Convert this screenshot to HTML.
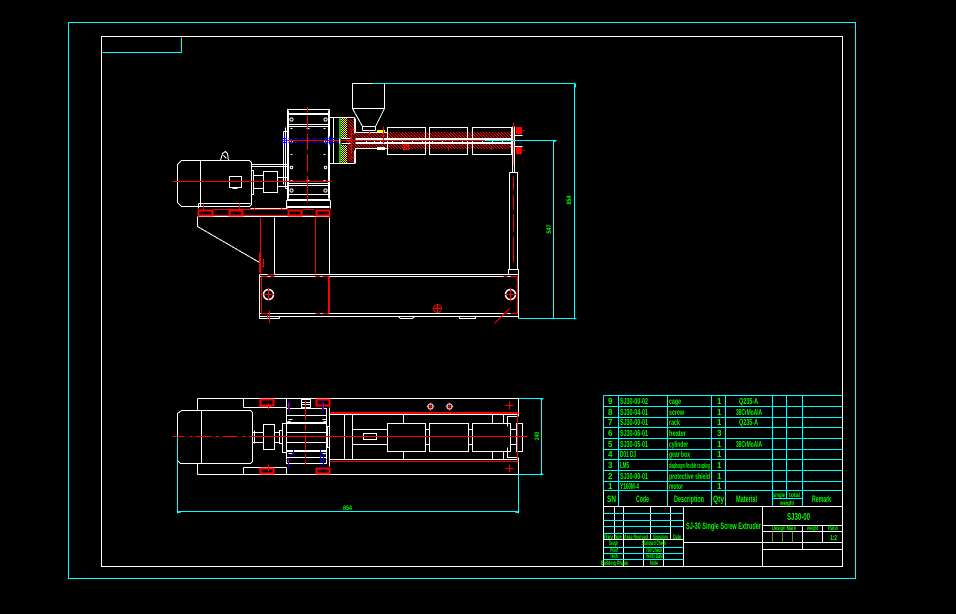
<!DOCTYPE html>
<html lang="en"><head><meta charset="utf-8"><title>SJ-30 Single Screw Extruder</title>
<style>
html,body{margin:0;padding:0;background:#000;width:956px;height:614px;overflow:hidden}
svg{display:block}
text{font-family:"Liberation Sans",sans-serif;fill:#00ff00;font-size:8px;font-weight:bold}
.c{text-anchor:middle}
</style></head><body>
<svg width="956" height="614" viewBox="0 0 956 614" xmlns="http://www.w3.org/2000/svg">
<defs>
<pattern id="rc" width="3" height="3" patternUnits="userSpaceOnUse"><rect width="3" height="3" fill="#200000"/><rect width="1" height="1" fill="#f00"/><rect x="1" y="1" width="1" height="1" fill="#f00"/><rect x="2" y="2" width="1" height="1" fill="#f00"/></pattern>
<pattern id="yc" width="2" height="2" patternUnits="userSpaceOnUse"><rect width="2" height="2" fill="#000"/><rect width="1" height="1" fill="#ff0"/><rect x="1" y="1" width="1" height="1" fill="#ff0"/></pattern>
</defs>
<rect width="956" height="614" fill="#000"/>
<g transform="translate(.5,.5)" fill="none" shape-rendering="crispEdges">
<!-- sheet frames -->
<path stroke="#00ffff" d="M68 22H855V578H68ZM102 52H181V37"/>
<path stroke="#fff" d="M101 36H842V566H101Z"/>

<!-- fills -->
<g stroke="none" transform="translate(-.5,-.5)">
<rect x="355" y="132" width="157" height="6" fill="url(#rc)"/>
<rect x="355" y="143" width="157" height="6" fill="url(#rc)"/>
<rect x="346" y="119" width="9" height="43" fill="url(#rc)"/>
<rect x="340" y="118" width="7" height="20" fill="url(#yc)"/>
<rect x="340" y="145" width="7" height="18" fill="url(#yc)"/>
<rect x="339" y="118" width="2" height="45" fill="#00c800"/>
<rect x="516" y="127" width="6" height="7" fill="#f00"/>
<rect x="516" y="147" width="6" height="7" fill="#f00"/>
<rect x="377" y="130" width="8" height="3" fill="#ff0"/>
<rect x="377" y="147" width="8" height="3" fill="#fff"/>
</g>

<!-- TOP VIEW white -->
<path stroke="#fff" d="
M181 160H249L251 162V204L249 206H181L177 202V164ZM200 160V206
M229 176H241V187H229Z M232 188H237
M220 160L222 153L225 151L227 153L228 160 M223 155L226 158
M251 164H287M251 166H287
M251 170H253V194H251Z M253 175H263M253 188H263
M263 171H277V192H263Z M277 177H287M277 186H287
M198 203H250M198 203V208M250 208H287
M287 109H329V199H287Z
M288 110V198M328 110V198
M287 113H329M287 114H329M287 124H329M287 126H329M287 183H329M287 185H329M287 194H329
M285 127V188M283 131V184M285 188H287M283 131H287
M329 117H354M329 163H354M333 117V163M354 117V133M354 150V163
M286 200H330M286 200V208M330 200V208
M286 206H329M286 207H329
M198 216H329
M197 216V226L259 262
M274 217V274M329 217V274
M259 274H518M259 276H518M259 313H518M259 316H518M259 318V274M518 318V274M259 318H279M279 316V318
M398 316L400 318H412L414 316M459 316V318H475V316
M508 274V269H518V274
M509 172H517V269M509 172V269M512 126V172M514 126V172
M352 83H384V108H352Z M352 108L362 126H375L384 108
M362 126V130M375 126V130M362 130H375
M387 127H425V154H387ZM429 127H467V154H429ZM472 127H511V154H472Z
M355 138H512M355 139H512M355 142H512M355 143H512M355 132H387M355 148H387M355 132V118M355 148V163
M366 138V143M374 138V143M380 138V143M392 138V143M402 138V143M412 138V143M422 138V143M432 138V143M442 138V143M452 138V143M462 138V143M472 138V143M482 138V143M492 138V143M502 138V143
M510 135H522M510 146H522"/>
<circle cx="268" cy="294" r="5" stroke="#fff" stroke-width="1.5" shape-rendering="auto"/>
<circle cx="510" cy="294" r="5" stroke="#fff" stroke-width="1.5" shape-rendering="auto"/>

<!-- gearbox bolts -->
<g stroke="#fff" shape-rendering="auto">
<circle cx="291" cy="119" r="1.6"/><circle cx="325" cy="119" r="1.6"/><circle cx="291" cy="190" r="1.6"/><circle cx="325" cy="190" r="1.6"/>
<circle cx="291" cy="141" r="1.2"/><circle cx="325" cy="141" r="1.2"/><circle cx="291" cy="167" r="1.2"/><circle cx="325" cy="167" r="1.2"/>
</g>
<path stroke="#fff" d="M290 128H292M306 128H309M323 128H325M290 154H292M323 154H325M290 180H292M323 180H325M306 180H309"/>

<!-- TOP VIEW red -->
<path stroke="#f00" d="M260 217V274M315 217V274"/>
<path stroke="#f00" stroke-width="2" d="M198 210H212V215H198ZM229 210H242V215H229ZM288 210H301V215H288ZM316 210H329V215H316Z"/>
<path stroke="#f00" d="M213 209H287M302 209H314M213 215H287M302 215H314"/>
<path stroke="#f00" d="
M281 140H330M330 140H512
M203 203V209M239 203V209M254 207V209M281 207V209
M259 252V272M263 258V266H261
M261 276V313H268M261 276H267M267 274H274M270 276H274M315 276H320M322 276H328M328 276V313M329 276V313M315 313H320M322 313H328
M503 276H507M510 276H517V313H510M503 313H507
M268 287V300M263 294H274M510 287V301M504 294H516
M269 310V322M267 314V318M494 323L509 308
M383 126V143M369 130V135M513 122V126M513 127V165M513 176V190M513 194V210M513 214V232M513 236V262
M351 130V154M352 140H355
M350 129H354M350 157H354M520 127V134M520 147V154M522 130H524M522 150H524
M403 146V150M448 146V150M491 146V149"/>
<path stroke="#f00" d="M404 144H408V149H404Z"/>
<circle cx="437" cy="308" r="4" stroke="#f00" shape-rendering="auto"/>
<path stroke="#f00" d="M433 308H441M437 304V312"/>

<!-- blue -->
<path stroke="#0000ff" stroke-dasharray="4 2" d="M282 138H340M282 142H340"/>
<path stroke="#0000ff" d="M282 137V144M284 136V145M286 137V144M327 135V145M329 136V144M331 138V143"/>
<path stroke="#fff" d="M339 138V143M341 138H350M341 143H350"/>

<!-- Dim top cyan -->
<path stroke="#00ffff" d="M372 83H575M574 83V319M518 318H576M484 140H556M553 140V318M518 318H555M574 84H575V87M553 141H555"/>

<!-- BOTTOM VIEW white -->
<path stroke="#fff" d="
M181 410H250L252 412V461L250 463H184L180 463L177 460V413Z M201 410V463
M197 398H518M197 474H518M197 398V410M197 463V474
M243 398V407M243 467V474M243 407H286M243 467H286M286 398V408M286 467V474
M252 432H263M252 442H263M252 428V445M254 430V443
M263 424H274V449H263Z M274 432H279M274 442H279
M279 430H282V443H279Z
M282 423H286V452H282Z
M286 408H326V463H286Z
M286 415H326M286 422H326M286 423H326M286 432H326M286 442H326M286 450H326M286 451H326M286 457H326
M327 426H329V447H327Z M326 426H329
M329 414H518M329 459H518M329 407V466
M344 414V459M352 414V459
M352 429H387M352 444H387
M363 433H376V439H363Z
M387 423H425V451H387ZM429 423H468V451H429ZM472 423H510V451H472Z
M403 414V423M403 451V459M492 414V423M492 451V459M503 414V423M503 451V459
M425 429H429M425 444H429M468 429H472M468 444H472M510 429H516M510 444H516
M516 423H522V451H516Z
M507 426V416H517M507 447V457H517
M518 398V416M518 457V474
M301 404V399H310V404H301Z"/>
<path stroke="#fff" d="M301 402H310V407H301Z"/>

<!-- BOTTOM VIEW red -->
<path stroke="#f00" d="M172 436H184M189 436H192M195 436H211M215 436H219M222 436H237M242 436H245M248 436H527
M330 413H518M330 412H518M329 461H518M517 413V461
M258 406H271M268 403V409M258 468H271M268 464V471
M505 405H513M509 401V409M505 468H513M509 464V472
M305 400V420M305 424V430M305 434V450M305 454V458M305 460V464
M288 402V409M323 402V409M288 458V466M323 458V466
M426 406H434M430 402V410M445 406H453M449 402V410"/>
<path stroke="#f00" stroke-width="2" d="M260 399H273V405H260ZM316 399H329V405H316ZM260 468H273V473H260ZM316 468H329V473H316Z"/>
<g stroke="#fff" shape-rendering="auto"><circle cx="430" cy="406" r="2.6"/><circle cx="449" cy="406" r="2.6"/></g>
<path stroke="#fff" d="M288 419H292M322 419H326M288 453H292M322 453H326M287 421H290M323 421H326"/>
<path stroke="#0000ff" d="M289 400V411M322 400V411M288 462V468M289 455L293 453V449M320 449V462M323 456V468M286 459H290M324 459H326"/>

<!-- bottom dims cyan -->
<path stroke="#00ffff" d="M518 398H543M518 474H543M541 398V474M540 399H542M540 473H542M177 436V513M518 474V513M177 511H518M177 512H180M515 512H518"/>

<!-- table -->
<path stroke="#00ffff" d="M603 395H842M603 406H842M603 417H842M603 427H842M603 438H842M603 449H842M603 459H842M603 470H842M603 481H842M603 490H842
M603 395V490M618 395V506M667 395V506M711 395V506M725 395V506M772 395V506M786 395V498M802 395V506
M772 498H802"/>
<path stroke="#fff" d="M603 490V566M603 506H842
M683 506V566M762 506V566M683 542H762
M762 525H842M762 531H842M762 542H842M762 549H842M802 525V549M822 525V542
M614 506V539M623 506V566M650 506V539M670 506V539M603 539H683M643 539V566M663 539V566"/>
<path stroke="#00ffff" d="M603 513H683M603 520H683M603 526H683M603 533H670M603 547H683M603 553H683M603 559H683"/>
<path stroke="#6b8e23" d="M772 531V542M782 531V542M792 531V542"/>
</g>

<!-- centre lines drawn as filled rects -->
<g fill="#f00" shape-rendering="crispEdges">
<rect x="173" y="181" width="159" height="1"/>
<rect x="307" y="107" width="1" height="5"/><rect x="307" y="115" width="1" height="15"/><rect x="307" y="134" width="1" height="16"/><rect x="307" y="154" width="1" height="18"/><rect x="307" y="176" width="1" height="26"/>
</g>

<!-- dims text -->
<text transform="translate(571,200) rotate(-90)" class="c" style="font-size:6px" textLength="9" lengthAdjust="spacingAndGlyphs">854</text>
<text transform="translate(551,229) rotate(-90)" class="c" style="font-size:6px" textLength="9" lengthAdjust="spacingAndGlyphs">547</text>
<text transform="translate(539,436) rotate(-90)" class="c" style="font-size:6px" textLength="8" lengthAdjust="spacingAndGlyphs">240</text>
<text x="343" y="510" style="font-size:6px" textLength="9" lengthAdjust="spacingAndGlyphs">854</text>

<!-- table text -->
<g>
<text x="608" y="404" textLength="4">9</text><text x="620" y="404" textLength="28" lengthAdjust="spacingAndGlyphs">SJ30-00-02</text><text x="669" y="404" textLength="12" lengthAdjust="spacingAndGlyphs">cage</text><text x="717" y="404">1</text><text x="739" y="404" textLength="19" lengthAdjust="spacingAndGlyphs">Q235-A</text>
<text x="608" y="415" textLength="4">8</text><text x="620" y="415" textLength="28" lengthAdjust="spacingAndGlyphs">SJ30-04-01</text><text x="669" y="415" textLength="15" lengthAdjust="spacingAndGlyphs">screw</text><text x="717" y="415">1</text><text x="736" y="415" textLength="26" lengthAdjust="spacingAndGlyphs">38CrMoAlA</text>
<text x="608" y="425" textLength="4">7</text><text x="620" y="425" textLength="28" lengthAdjust="spacingAndGlyphs">SJ30-00-01</text><text x="669" y="425" textLength="11" lengthAdjust="spacingAndGlyphs">rack</text><text x="717" y="425">1</text><text x="739" y="425" textLength="19" lengthAdjust="spacingAndGlyphs">Q235-A</text>
<text x="608" y="436" textLength="4">6</text><text x="620" y="436" textLength="28" lengthAdjust="spacingAndGlyphs">SJ30-06-01</text><text x="669" y="436" textLength="17" lengthAdjust="spacingAndGlyphs">heater</text><text x="717" y="436">3</text>
<text x="608" y="447" textLength="4">5</text><text x="620" y="447" textLength="28" lengthAdjust="spacingAndGlyphs">SJ30-05-01</text><text x="669" y="447" textLength="19" lengthAdjust="spacingAndGlyphs">cylinder</text><text x="717" y="447">1</text><text x="736" y="447" textLength="26" lengthAdjust="spacingAndGlyphs">38CrMoAlA</text>
<text x="608" y="457" textLength="4">4</text><text x="620" y="457" textLength="16" lengthAdjust="spacingAndGlyphs">D01 D3</text><text x="669" y="457" textLength="21" lengthAdjust="spacingAndGlyphs">gear box</text><text x="717" y="457">1</text>
<text x="608" y="468" textLength="4">3</text><text x="620" y="468" textLength="9" lengthAdjust="spacingAndGlyphs">LM5</text><text x="669" y="468" textLength="41" lengthAdjust="spacingAndGlyphs" style="font-size:7px">diaphragm flexible coupling</text><text x="717" y="468">1</text>
<text x="608" y="479" textLength="4">2</text><text x="620" y="479" textLength="28" lengthAdjust="spacingAndGlyphs">SJ30-00-01</text><text x="669" y="479" textLength="41" lengthAdjust="spacingAndGlyphs">protective shield</text><text x="717" y="479">1</text>
<text x="608" y="489" textLength="4">1</text><text x="620" y="489" textLength="19" lengthAdjust="spacingAndGlyphs">Y160M-4</text><text x="669" y="489" textLength="14" lengthAdjust="spacingAndGlyphs">motor</text><text x="717" y="489">1</text>
<text x="607" y="502" textLength="9" lengthAdjust="spacingAndGlyphs" style="font-size:9px">SN</text>
<text x="636" y="502" textLength="13" lengthAdjust="spacingAndGlyphs" style="font-size:9px">Code</text>
<text x="674" y="502" textLength="30" lengthAdjust="spacingAndGlyphs" style="font-size:9px">Description</text>
<text x="713" y="502" textLength="11" lengthAdjust="spacingAndGlyphs" style="font-size:9px">Qty</text>
<text x="736" y="502" textLength="21" lengthAdjust="spacingAndGlyphs" style="font-size:9px">Material</text>
<text x="773" y="497" textLength="12" lengthAdjust="spacingAndGlyphs" style="font-size:6px">single</text>
<text x="789" y="497" textLength="11" lengthAdjust="spacingAndGlyphs" style="font-size:6px">total</text>
<text x="780" y="505" textLength="14" lengthAdjust="spacingAndGlyphs" style="font-size:6px">weight</text>
<text x="812" y="502" textLength="19" lengthAdjust="spacingAndGlyphs" style="font-size:9px">Remark</text>
</g>

<!-- title text -->
<text x="686" y="529" textLength="75" lengthAdjust="spacingAndGlyphs" style="font-size:9px">SJ-30 Single Screw Extruder</text>
<text x="787" y="520" textLength="23" lengthAdjust="spacingAndGlyphs" style="font-size:10px">SJ30-00</text>
<g>
<text x="604" y="539" textLength="9" lengthAdjust="spacingAndGlyphs" style="font-size:6px">Rev</text>
<text x="615" y="539" textLength="7" lengthAdjust="spacingAndGlyphs" style="font-size:6px">Num</text>
<text x="624" y="539" textLength="24" lengthAdjust="spacingAndGlyphs" style="font-size:6px">Area Revised</text>
<text x="653" y="539" textLength="15" lengthAdjust="spacingAndGlyphs" style="font-size:6px">Signature</text>
<text x="673" y="539" textLength="8" lengthAdjust="spacingAndGlyphs" style="font-size:6px">Date</text>
<text x="609" y="545" textLength="9" lengthAdjust="spacingAndGlyphs" style="font-size:6px">Design</text>
<text x="642" y="545" textLength="24" lengthAdjust="spacingAndGlyphs" style="font-size:6px">Standard Check</text>
<text x="610" y="552" textLength="8" lengthAdjust="spacingAndGlyphs" style="font-size:6px">Proof</text>
<text x="646" y="552" textLength="16" lengthAdjust="spacingAndGlyphs" style="font-size:6px">Toll Check</text>
<text x="610" y="558" textLength="8" lengthAdjust="spacingAndGlyphs" style="font-size:6px">Tech</text>
<text x="646" y="558" textLength="17" lengthAdjust="spacingAndGlyphs" style="font-size:6px">Verify Date</text>
<text x="601" y="565" textLength="27" lengthAdjust="spacingAndGlyphs" style="font-size:6px">Building Phase</text>
<text x="650" y="565" textLength="8" lengthAdjust="spacingAndGlyphs" style="font-size:6px">Note</text>
<text x="772" y="530" textLength="24" lengthAdjust="spacingAndGlyphs" style="font-size:6px">Design Mark</text>
<text x="807" y="530" textLength="11" lengthAdjust="spacingAndGlyphs" style="font-size:6px">weight</text>
<text x="828" y="530" textLength="10" lengthAdjust="spacingAndGlyphs" style="font-size:6px">Ratio</text>
<text x="830" y="540" textLength="7" lengthAdjust="spacingAndGlyphs" style="font-size:7px">1:2</text>
</g>
</svg>
</body></html>
